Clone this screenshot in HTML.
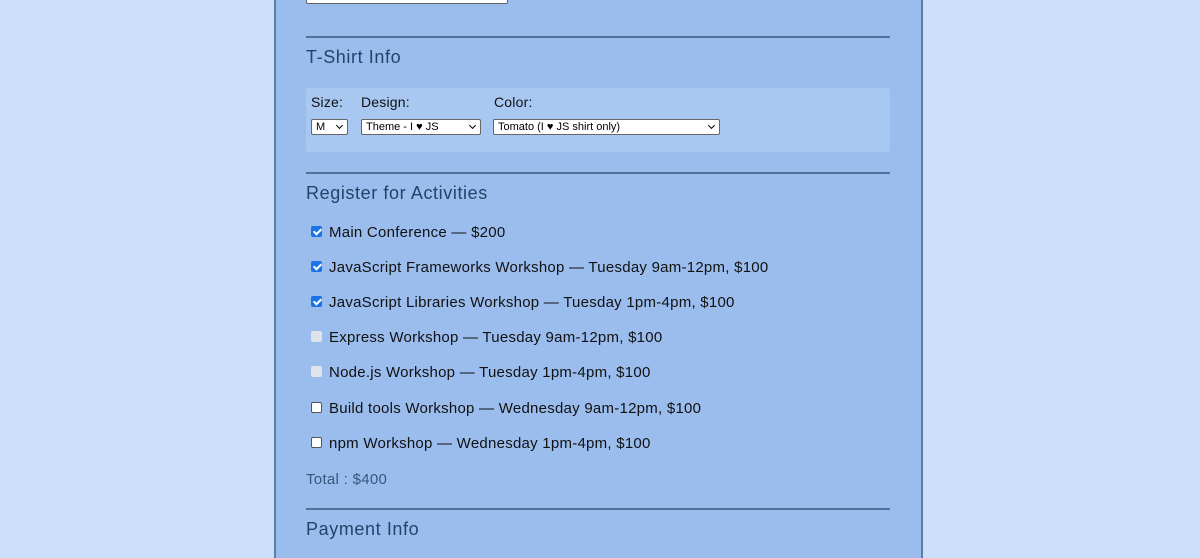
<!DOCTYPE html>
<html><head><style>
body{margin:0;width:1200px;height:550px;background:#cce0f9;font-family:"Liberation Sans",sans-serif;overflow:hidden;position:relative}
.c{position:absolute;left:274px;top:-2px;width:645px;height:560px;background:#9bbdee;border-left:2px solid #5b7fa6;border-right:2px solid #5b7fa6}
.a{position:absolute}
hr{position:absolute;left:306px;width:584px;margin:0;border:0;border-top:2px solid #4f7399}
h2{position:absolute;left:306px;margin:0;font-size:18px;font-weight:normal;color:#1f4568;letter-spacing:0.6px}
.sel{position:absolute;height:14px;background:#fff;border:1px solid #666;border-radius:2px;font-size:11px;line-height:14px;padding-left:4px;box-sizing:content-box;color:#000}
.sel:after{content:"";position:absolute;right:5px;top:3px;width:4px;height:4px;border-right:1.5px solid #000;border-bottom:1.5px solid #000;transform:rotate(45deg)}
.cb{position:absolute;left:311px;width:11px;height:11px;border-radius:2px}
.on{background:#1a73e8}
.on:after{content:"";position:absolute;left:3.5px;top:1px;width:3px;height:6px;border-right:2px solid #fff;border-bottom:2px solid #fff;transform:rotate(45deg)}
.dis{background:#dfe4ea}
.off{background:#fff;border:1px solid #555;width:9px;height:9px}
.t{position:absolute;left:329px;font-size:15px;color:#111;letter-spacing:0.25px}
.lab{position:absolute;font-size:14px;color:#111;top:94px;letter-spacing:0.2px}
</style></head><body>
<div class="c"></div>
<div class="sel" style="left:306px;top:-12px;width:196px"></div>
<hr style="top:36px">
<h2 style="top:47px">T-Shirt Info</h2>
<div class="a" style="left:306px;top:88px;width:584px;height:64px;background:#a8c7f1;border-radius:3px"></div>
<div class="lab" style="left:311px">Size:</div>
<div class="lab" style="left:361px">Design:</div>
<div class="lab" style="left:494px">Color:</div>
<div class="sel" style="left:311px;top:119px;width:31px">M</div>
<div class="sel" style="left:361px;top:119px;width:114px">Theme - I ♥ JS</div>
<div class="sel" style="left:493px;top:119px;width:221px">Tomato (I ♥ JS shirt only)</div>
<hr style="top:172px">
<h2 style="top:183px">Register for Activities</h2>
<div class="cb on" style="top:226px"></div><div class="t" style="top:224px">Main Conference — $200</div>
<div class="cb on" style="top:261px"></div><div class="t" style="top:259px">JavaScript Frameworks Workshop — Tuesday 9am-12pm, $100</div>
<div class="cb on" style="top:296px"></div><div class="t" style="top:294px">JavaScript Libraries Workshop — Tuesday 1pm-4pm, $100</div>
<div class="cb dis" style="top:331px"></div><div class="t" style="top:329px">Express Workshop — Tuesday 9am-12pm, $100</div>
<div class="cb dis" style="top:366px"></div><div class="t" style="top:364px">Node.js Workshop — Tuesday 1pm-4pm, $100</div>
<div class="cb off" style="top:402px"></div><div class="t" style="top:400px">Build tools Workshop — Wednesday 9am-12pm, $100</div>
<div class="cb off" style="top:437px"></div><div class="t" style="top:435px">npm Workshop — Wednesday 1pm-4pm, $100</div>
<div class="a" style="left:306px;top:471px;font-size:15px;color:#34587e;letter-spacing:0.3px">Total : $400</div>
<hr style="top:508px">
<h2 style="top:519px">Payment Info</h2>
</body></html>
